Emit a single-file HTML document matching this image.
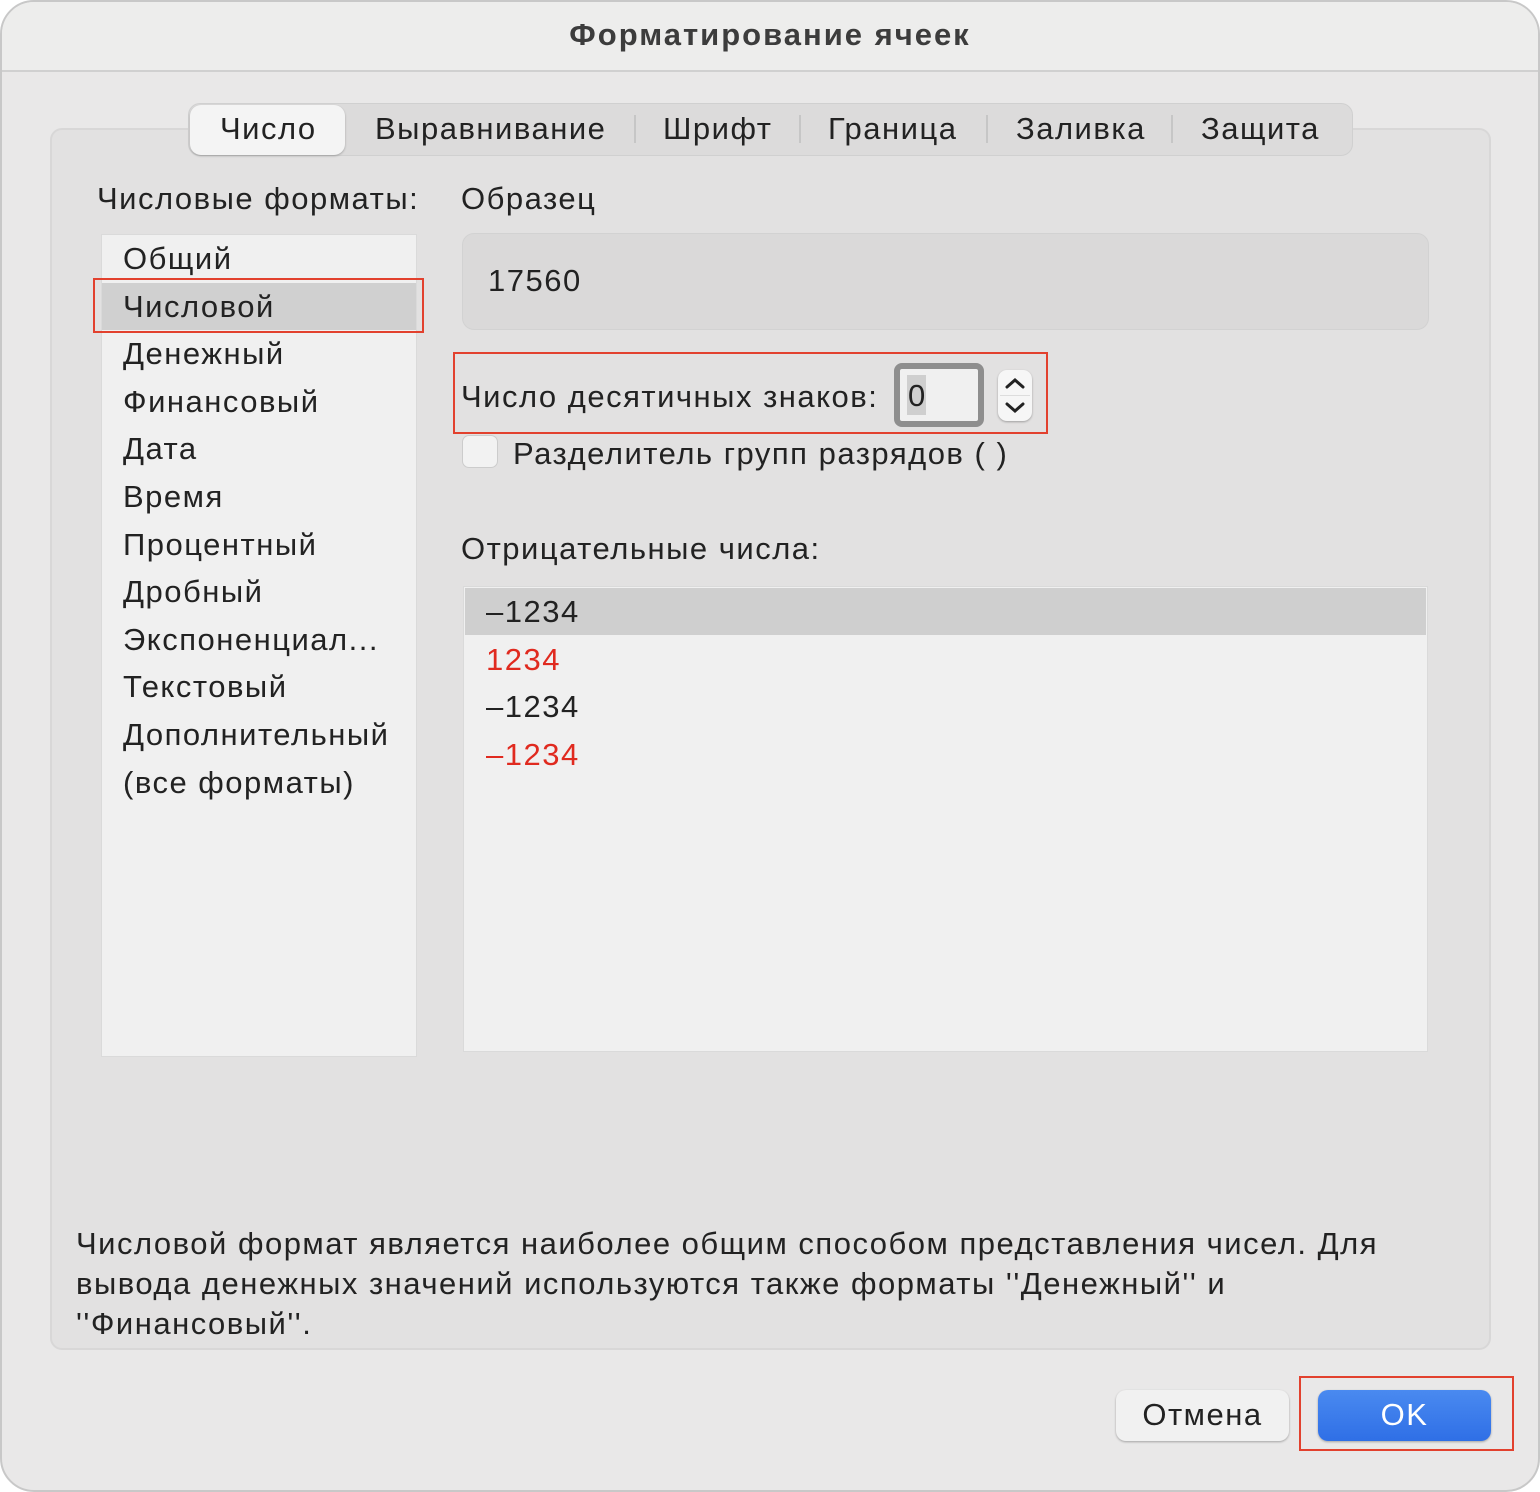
<!DOCTYPE html>
<html><head><meta charset="utf-8"><style>
*{margin:0;padding:0;box-sizing:border-box}
body{width:1540px;height:1492px;background:#fff;font-family:"Liberation Sans","DejaVu Sans",sans-serif;color:#222;position:relative;overflow:hidden}
.a{position:absolute;white-space:nowrap}
.win{position:absolute;left:0;top:0;width:1540px;height:1492px;background:#e9e8e8;border-radius:34px;border:2px solid #c8c8c8}
.t{font-size:31px;line-height:36px;letter-spacing:1.5px}
.red{border:2px solid #e2412e}
</style></head><body>
<div class="win"></div>
<div class="a" style="left:2px;top:2px;width:1536px;height:70px;background:#ededec;border-bottom:2px solid #d0d0d0;border-radius:32px 32px 0 0"></div>
<div class="a" style="left:0;top:17px;width:1540px;text-align:center;font-size:31px;font-weight:bold;color:#3c3c3c;letter-spacing:2px">Форматирование ячеек</div>
<div class="a" style="left:50px;top:128px;width:1441px;height:1222px;background:#e2e1e1;border:2px solid #d8d7d7;border-radius:12px"></div>
<div class="a" style="left:188px;top:103px;width:1165px;height:53px;background:#dcdbdb;border:1px solid #d0d0d0;border-radius:12px"></div>
<div class="a" style="left:190px;top:105px;width:155px;height:50px;background:#f4f4f4;border-radius:11px;box-shadow:0 1px 2px rgba(0,0,0,.25)"></div>
<div class="a t" style="left:220px;top:111px">Число</div>
<div class="a t" style="left:375px;top:111px">Выравнивание</div>
<div class="a" style="left:634px;top:115px;width:2px;height:28px;background:#c6c6c6"></div>
<div class="a t" style="left:663px;top:111px">Шрифт</div>
<div class="a" style="left:799px;top:115px;width:2px;height:28px;background:#c6c6c6"></div>
<div class="a t" style="left:828px;top:111px">Граница</div>
<div class="a" style="left:986px;top:115px;width:2px;height:28px;background:#c6c6c6"></div>
<div class="a t" style="left:1016px;top:111px">Заливка</div>
<div class="a" style="left:1171px;top:115px;width:2px;height:28px;background:#c6c6c6"></div>
<div class="a t" style="left:1201px;top:111px">Защита</div>

<div class="a t" style="left:97px;top:181px">Числовые форматы:</div>
<div class="a t" style="left:461px;top:181px">Образец</div>

<div class="a" style="left:101px;top:234px;width:316px;height:823px;background:#f0f0f0;border:1px solid #dadada"></div>
<div class="a" style="left:102px;top:283px;width:314px;height:47px;background:#d0d0d0"></div>
<div class="a red" style="left:93px;top:278px;width:331px;height:55px"></div>
<div class="a t" style="left:123px;top:235px;line-height:47.6px">Общий<br>Числовой<br>Денежный<br>Финансовый<br>Дата<br>Время<br>Процентный<br>Дробный<br>Экспоненциал...<br>Текстовый<br>Дополнительный<br>(все форматы)</div>

<div class="a" style="left:462px;top:233px;width:967px;height:97px;background:#dad9d9;border:1px solid #d2d2d2;border-radius:12px"></div>
<div class="a t" style="left:488px;top:263px">17560</div>

<div class="a red" style="left:453px;top:352px;width:595px;height:82px"></div>
<div class="a t" style="left:461px;top:379px">Число десятичных знаков:</div>
<div class="a" style="left:894px;top:363px;width:90px;height:64px;background:#f0f0f0;border:6px solid #8e8e8e;border-radius:8px"></div>
<div class="a" style="left:907px;top:375px;width:19px;height:40px;background:#cfcfcf"></div>
<div class="a t" style="left:908px;top:378px">0</div>
<div class="a" style="left:998px;top:370px;width:34px;height:51px;background:#f6f6f6;border-radius:9px;box-shadow:0 1px 2px rgba(0,0,0,.3)"></div>
<svg class="a" style="left:998px;top:370px" width="34" height="51"><path d="M9 17 L17 10 L25 17 M9 34 L17 41 L25 34" stroke="#222" stroke-width="3" fill="none" stroke-linecap="round"/><line x1="2" y1="25.5" x2="32" y2="25.5" stroke="#ddd"/></svg>

<div class="a" style="left:462px;top:435px;width:36px;height:33px;background:#f2f2f2;border:1px solid #ccc;border-radius:7px"></div>
<div class="a t" style="left:513px;top:436px">Разделитель групп разрядов ( )</div>

<div class="a t" style="left:461px;top:531px">Отрицательные числа:</div>
<div class="a" style="left:463px;top:586px;width:965px;height:466px;background:#f0f0f0;border:1px solid #dadada"></div>
<div class="a" style="left:465px;top:588px;width:961px;height:47px;background:#cfcfcf"></div>
<div class="a t" style="left:486px;top:588px;line-height:47.5px">–1234<br><span style="color:#e02a1f">1234</span><br>–1234<br><span style="color:#e02a1f">–1234</span></div>

<div class="a t" style="left:76px;top:1224px;line-height:40px;color:#222">Числовой формат является наиболее общим способом представления чисел. Для<br>вывода денежных значений используются также форматы ''Денежный'' и<br>''Финансовый''.</div>

<div class="a" style="left:1116px;top:1390px;width:173px;height:51px;background:#f1f1f1;border-radius:10px;box-shadow:0 1px 2px rgba(0,0,0,.3)"></div>
<div class="a t" style="left:1116px;top:1397px;width:173px;text-align:center">Отмена</div>
<div class="a" style="left:1318px;top:1390px;width:173px;height:51px;background:linear-gradient(#4a8af0,#2f6fe6);border-radius:10px;box-shadow:0 1px 2px rgba(0,0,0,.3)"></div>
<div class="a t" style="left:1318px;top:1397px;width:173px;text-align:center;color:#fff">OK</div>
<div class="a red" style="left:1299px;top:1376px;width:215px;height:75px"></div>
</body></html>
